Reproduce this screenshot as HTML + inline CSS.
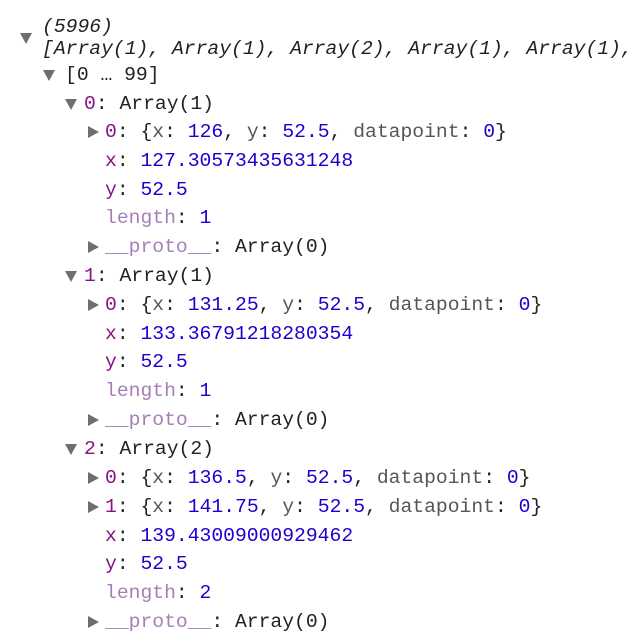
<!DOCTYPE html>
<html><head><meta charset="utf-8"><style>
body{margin:0;width:644px;height:641px;background:#fff;position:relative;overflow:hidden;font-family:"Liberation Mono",monospace;font-size:19.7px;color:#222}
.r{position:absolute;white-space:pre;line-height:24px;height:24px}
.k{color:#881280}.n{color:#1c00cf}.g{color:#565656}.p{color:#a67fb8}
.td,.tr{position:absolute;width:0;height:0}
.td{border-left:6px solid transparent;border-right:6px solid transparent;border-top:11px solid #6e6e6e}
.tr{border-top:6px solid transparent;border-bottom:6px solid transparent;border-left:11px solid #6e6e6e}
i{font-style:italic}
</style></head><body>
<div class="td" style="left:20px;top:33px"></div>
<div class="r" style="left:42px;top:15px"><i>(5996)</i></div>
<div class="r" style="left:42px;top:37px"><i>[Array(1), Array(1), Array(2), Array(1), Array(1),</i></div>
<div class="td" style="left:43px;top:70px"></div>
<div class="r" style="left:65px;top:63px">[0 … 99]</div>

<div class="td" style="left:65px;top:99px"></div>
<div class="r" style="left:84px;top:92px"><span class="k">0</span>: Array(1)</div>
<div class="tr" style="left:88px;top:126px"></div>
<div class="r" style="left:105px;top:120px"><span class="k">0</span>: {<span class="g">x</span>: <span class="n">126</span>, <span class="g">y</span>: <span class="n">52.5</span>, <span class="g">datapoint</span>: <span class="n">0</span>}</div>
<div class="r" style="left:105px;top:149px"><span class="k">x</span>: <span class="n">127.30573435631248</span></div>
<div class="r" style="left:105px;top:178px"><span class="k">y</span>: <span class="n">52.5</span></div>
<div class="r" style="left:105px;top:206px"><span class="p">length</span>: <span class="n">1</span></div>
<div class="tr" style="left:88px;top:241px"></div>
<div class="r" style="left:105px;top:235px"><span class="p">__proto__</span>: Array(0)</div>

<div class="td" style="left:65px;top:271px"></div>
<div class="r" style="left:84px;top:264px"><span class="k">1</span>: Array(1)</div>
<div class="tr" style="left:88px;top:299px"></div>
<div class="r" style="left:105px;top:293px"><span class="k">0</span>: {<span class="g">x</span>: <span class="n">131.25</span>, <span class="g">y</span>: <span class="n">52.5</span>, <span class="g">datapoint</span>: <span class="n">0</span>}</div>
<div class="r" style="left:105px;top:322px"><span class="k">x</span>: <span class="n">133.36791218280354</span></div>
<div class="r" style="left:105px;top:350px"><span class="k">y</span>: <span class="n">52.5</span></div>
<div class="r" style="left:105px;top:379px"><span class="p">length</span>: <span class="n">1</span></div>
<div class="tr" style="left:88px;top:414px"></div>
<div class="r" style="left:105px;top:408px"><span class="p">__proto__</span>: Array(0)</div>

<div class="td" style="left:65px;top:444px"></div>
<div class="r" style="left:84px;top:437px"><span class="k">2</span>: Array(2)</div>
<div class="tr" style="left:88px;top:472px"></div>
<div class="r" style="left:105px;top:466px"><span class="k">0</span>: {<span class="g">x</span>: <span class="n">136.5</span>, <span class="g">y</span>: <span class="n">52.5</span>, <span class="g">datapoint</span>: <span class="n">0</span>}</div>
<div class="tr" style="left:88px;top:501px"></div>
<div class="r" style="left:105px;top:495px"><span class="k">1</span>: {<span class="g">x</span>: <span class="n">141.75</span>, <span class="g">y</span>: <span class="n">52.5</span>, <span class="g">datapoint</span>: <span class="n">0</span>}</div>
<div class="r" style="left:105px;top:524px"><span class="k">x</span>: <span class="n">139.43009000929462</span></div>
<div class="r" style="left:105px;top:552px"><span class="k">y</span>: <span class="n">52.5</span></div>
<div class="r" style="left:105px;top:581px"><span class="p">length</span>: <span class="n">2</span></div>
<div class="tr" style="left:88px;top:616px"></div>
<div class="r" style="left:105px;top:610px"><span class="p">__proto__</span>: Array(0)</div>
</body></html>
